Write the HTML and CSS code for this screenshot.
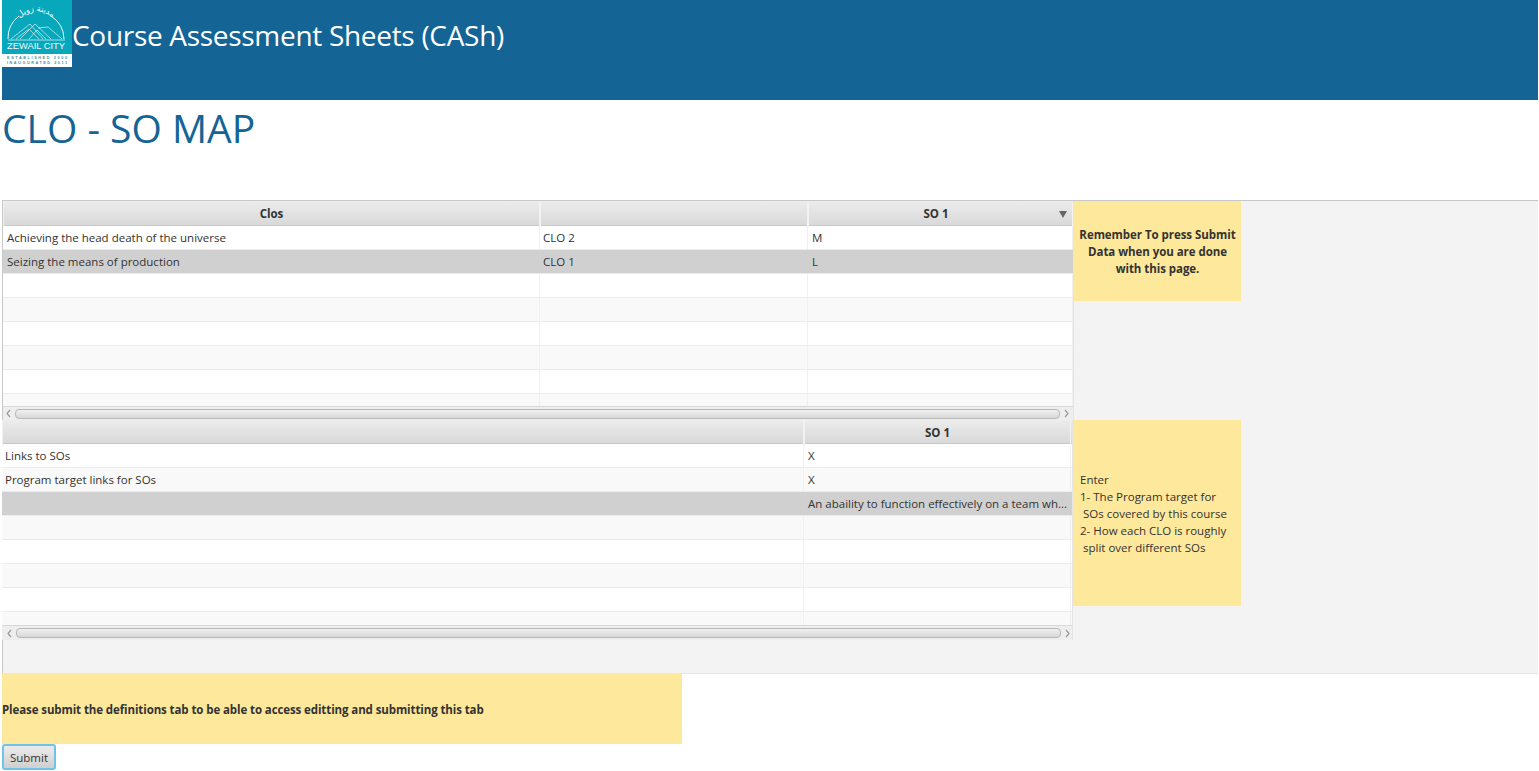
FILE: index.html
```html
<!DOCTYPE html>
<html lang="en">
<head>
    <meta charset="UTF-8">
    <meta name="viewport" content="width=device-width, initial-scale=1.0">
    <title>Course Assessment Sheets (CASh)</title>
    <link rel="stylesheet" href="styles.css">
</head>
<body>
    <div class="app-header">
        <svg class="logo" width="70" height="67" viewBox="0 0 70 67" role="img" aria-label="Zewail City logo">
            <rect width="70" height="67" fill="#fff"/>
            <rect width="70" height="54" fill="#08a8bc"/>
            <path d="M6 39 A28 28 0 0 1 17 16 M49 16 A28 28 0 0 1 62 39" fill="none" stroke="#e8f8fa" stroke-width="1"/>
            <path id="logoArc" d="M14 22 A24 24 0 0 1 54 22" fill="none"/>
            <path d="M9 39 L28 24 L41 39 M18 39 L33 24 L49 39 M36 28 L46 27 L60 39 M14 39 L27 29 L37 39 M27 39 L35 30 L44 39" fill="none" stroke="#d8f2f5" stroke-width=".7"/>
            <text class="logo-arabic" text-anchor="middle"><textPath href="#logoArc" startOffset="50%">مدينة زويل</textPath></text>
            <path d="M6 40 H63" stroke="#e8f8fa" stroke-width=".7"/>
            <text x="34" y="49" class="logo-name" text-anchor="middle" textLength="58" lengthAdjust="spacingAndGlyphs">ZEWAIL CITY</text>
            <text x="35" y="59" class="logo-small" text-anchor="middle" textLength="60">ESTABLISHED 2000</text>
            <text x="35" y="64" class="logo-small" text-anchor="middle" textLength="60">INAUGURATED 2011</text>
        </svg>
        <div class="app-title">Course Assessment Sheets (CASh)</div>
    </div>

    <h1 class="page-title">CLO - SO MAP</h1>

    <div class="main-panel">
        <div class="table-row first">
            <div class="table-box">
                <div class="cols cols-a head">
                    <div class="th">Clos</div>
                    <div class="th"></div>
                    <div class="th sorted">SO 1<span class="sort-arrow"></span></div>
                </div>
                <div class="rows">
                    <div class="cols cols-a row"><div class="td">Achieving the head death of the universe</div><div class="td">CLO 2</div><div class="td">M</div></div>
                    <div class="cols cols-a row selected"><div class="td">Seizing the means of production</div><div class="td">CLO 1</div><div class="td">L</div></div>
                    <div class="cols cols-a row"><div class="td"></div><div class="td"></div><div class="td"></div></div>
                    <div class="cols cols-a row alt"><div class="td"></div><div class="td"></div><div class="td"></div></div>
                    <div class="cols cols-a row"><div class="td"></div><div class="td"></div><div class="td"></div></div>
                    <div class="cols cols-a row alt"><div class="td"></div><div class="td"></div><div class="td"></div></div>
                    <div class="cols cols-a row"><div class="td"></div><div class="td"></div><div class="td"></div></div>
                    <div class="cols cols-a row alt"><div class="td"></div><div class="td"></div><div class="td"></div></div>
                </div>
                <div class="hscroll">
                    <svg class="arrow" width="7" height="9" viewBox="0 0 7 9"><path d="M5 1 L2 4.5 L5 8" fill="none" stroke="#999" stroke-width="1.2"/></svg>
                    <div class="thumb"></div>
                    <svg class="arrow" width="7" height="9" viewBox="0 0 7 9"><path d="M2 1 L5 4.5 L2 8" fill="none" stroke="#999" stroke-width="1.2"/></svg>
                </div>
            </div>
            <div class="note note-center">Remember To press Submit Data when you are done with this page.</div>
        </div>

        <div class="table-row second">
            <div class="table-box">
                <div class="cols cols-b head">
                    <div class="th"></div>
                    <div class="th">SO 1</div>
                </div>
                <div class="rows">
                    <div class="cols cols-b row"><div class="td">Links to SOs</div><div class="td">X</div></div>
                    <div class="cols cols-b row alt"><div class="td">Program target links for SOs</div><div class="td">X</div></div>
                    <div class="cols cols-b row selected"><div class="td"></div><div class="td">An abaility to function effectively on a team wh...</div></div>
                    <div class="cols cols-b row alt"><div class="td"></div><div class="td"></div></div>
                    <div class="cols cols-b row"><div class="td"></div><div class="td"></div></div>
                    <div class="cols cols-b row alt"><div class="td"></div><div class="td"></div></div>
                    <div class="cols cols-b row"><div class="td"></div><div class="td"></div></div>
                    <div class="cols cols-b row alt"><div class="td"></div><div class="td"></div></div>
                </div>
                <div class="hscroll">
                    <svg class="arrow" width="7" height="9" viewBox="0 0 7 9"><path d="M5 1 L2 4.5 L5 8" fill="none" stroke="#999" stroke-width="1.2"/></svg>
                    <div class="thumb"></div>
                    <svg class="arrow" width="7" height="9" viewBox="0 0 7 9"><path d="M2 1 L5 4.5 L2 8" fill="none" stroke="#999" stroke-width="1.2"/></svg>
                </div>
            </div>
            <div class="note note-left">Enter<br>1- The Program target for<br>&nbsp;SOs covered by this course<br>2- How each CLO is roughly<br>&nbsp;split over different SOs</div>
        </div>
    </div>

    <div class="warning">Please submit the definitions tab to be able to access editting and submitting this tab</div>
    <button class="submit-btn">Submit</button>
</body>
</html>
```

FILE: styles.css
```css
html, body {
    margin: 0;
    padding: 0;
}
body {
    font-family: 'Open Sans', 'Noto Sans', sans-serif;
    font-size: 11.5px;
    color: #333;
    background-color: white;
    padding: 0 1px 0 2px;
    height: 771px;
    overflow: hidden;
}
.app-header {
    display: flex;
    align-items: flex-start;
    height: 100px;
    background-color: #146496;
}
.logo {
    display: block;
    flex: none;
}
.logo-arabic {
    font-family: 'DejaVu Sans', sans-serif;
    font-size: 8px;
    fill: #fff;
}
.logo-name {
    font-family: 'Liberation Sans', sans-serif;
    font-size: 9px;
    fill: #f2fbfc;
}
.logo-small {
    font-family: 'Liberation Sans', sans-serif;
    font-size: 3.8px;
    font-weight: bold;
    fill: #3f8f9c;
}
.app-title {
    font-size: 28px;
    letter-spacing: -0.3px;
    line-height: 40px;
    margin-top: 15px;
    color: white;
}
.page-title {
    margin: 0;
    height: 100px;
    font-size: 39px;
    line-height: 56px;
    font-weight: normal;
    color: #146496;
}
.main-panel {
    height: 472px;
    background-color: #f3f3f3;
    border-top: 1px solid #c8c8c8;
    border-left: 1px solid #c8c8c8;
    border-bottom: 1px solid #e6e6e6;
}
.table-row {
    display: flex;
    align-items: flex-start;
}
.table-row.first {
    height: 219px;
}
.table-row.second {
    margin-left: -1px;
}
.table-box {
    width: 1071px;
    flex: none;
    box-sizing: border-box;
    background-color: white;
    border-right: 1px solid #e4e4e4;
}
.cols {
    display: grid;
}
.cols-a {
    grid-template-columns: 537px 268px 265px;
}
.cols-b {
    grid-template-columns: 802px 267px;
}
.head {
    height: 25px;
    background: linear-gradient(#ececec, #d9d9d9);
    border-bottom: 1px solid #c8c8c8;
    box-sizing: border-box;
}
.second .head {
    height: 24px;
}
.th {
    position: relative;
    line-height: 26px;
    font-weight: bold;
    text-align: center;
    border-right: 1px solid #f2f2f2;
    border-left: 1px solid #f2f2f2;
}
.th.sorted {
    padding-right: 9px;
}
.sort-arrow {
    position: absolute;
    right: 5px;
    top: 10px;
    border-left: 4px solid transparent;
    border-right: 4px solid transparent;
    border-top: 7px solid #666;
}
.rows {
    height: 180px;
    overflow: hidden;
}
.second .rows {
    height: 181px;
}
.row {
    height: 24px;
    box-sizing: border-box;
    background-color: white;
    border-bottom: 1px solid #ececec;
}
.row.alt {
    background-color: #f9f9f9;
}
.row.selected {
    background-color: #d0d0d0;
}
.td {
    line-height: 23px;
    padding-left: 4px;
    border-right: 1px solid #f0f0f0;
    white-space: nowrap;
    overflow: hidden;
}
.first .td:nth-child(2) {
    padding-left: 3px;
}
.second .td:first-child {
    padding-left: 3px;
}
.selected .td {
    border-right-color: #d0d0d0;
}
.hscroll {
    display: flex;
    align-items: center;
    gap: 3px;
    height: 14px;
    padding: 0 3px 0 2px;
    box-sizing: border-box;
    background-color: #eee;
    border-top: 1px solid #d8d8d8;
}
.second .hscroll {
    height: 15px;
    padding: 0 1px 0 4px;
}
.arrow {
    flex: none;
}
.thumb {
    flex: 1;
    height: 10px;
    box-sizing: border-box;
    background: linear-gradient(#f0f0f0, #d8d8d8);
    border: 1px solid #b8b8b8;
    border-radius: 4px;
}
.note {
    flex: none;
    box-sizing: border-box;
    background-color: #fee89b;
    display: flex;
    align-items: center;
}
.note-center {
    width: 167px;
    height: 100px;
    padding: 0 4px;
    text-align: center;
    font-weight: bold;
    letter-spacing: -0.05px;
    line-height: 17px;
}
.note-left {
    width: 168px;
    height: 186px;
    padding: 0 7px;
    line-height: 17px;
}
.warning {
    display: flex;
    align-items: center;
    width: 680px;
    height: 70px;
    font-weight: bold;
    letter-spacing: -0.1px;
    background-color: #fee89b;
}
.submit-btn {
    display: block;
    width: 54px;
    height: 26px;
    padding: 0;
    font: inherit;
    color: #333;
    background: linear-gradient(#ececec, #cfcfcf);
    border: 2px solid #6fc3e8;
    border-radius: 3px;
}
```
